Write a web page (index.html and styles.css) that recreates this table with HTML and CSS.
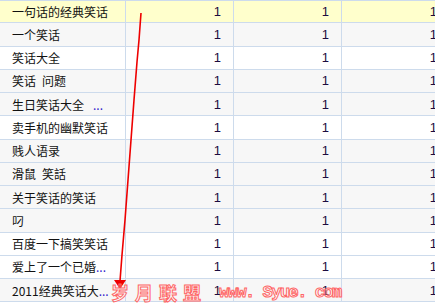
FILE: index.html
```html
<!DOCTYPE html>
<html lang="zh">
<head>
<meta charset="utf-8">
<title>关键词</title>
<link rel="stylesheet" href="styles.css">
</head>
<body>
<div class="grid">
  <div class="row hl"><div class="c name">一句话的经典笑话</div><div class="c num">1</div><div class="c num">1</div><div class="c num">1</div></div>
  <div class="row gr"><div class="c name">一个笑话</div><div class="c num">1</div><div class="c num">1</div><div class="c num">1</div></div>
  <div class="row wh"><div class="c name">笑话大全</div><div class="c num">1</div><div class="c num">1</div><div class="c num">1</div></div>
  <div class="row gr"><div class="c name">笑话<span class="gap"></span>问题</div><div class="c num">1</div><div class="c num">1</div><div class="c num">1</div></div>
  <div class="row gr"><div class="c name">生日笑话大全<span class="gap wide"></span><span class="dots">...</span></div><div class="c num">1</div><div class="c num">1</div><div class="c num">1</div></div>
  <div class="row wh"><div class="c name">卖手机的幽默笑话</div><div class="c num">1</div><div class="c num">1</div><div class="c num">1</div></div>
  <div class="row gr"><div class="c name">贱人语录</div><div class="c num">1</div><div class="c num">1</div><div class="c num">1</div></div>
  <div class="row gr"><div class="c name">滑鼠<span class="gap"></span>笑話</div><div class="c num">1</div><div class="c num">1</div><div class="c num">1</div></div>
  <div class="row gr"><div class="c name">关于笑话的笑话</div><div class="c num">1</div><div class="c num">1</div><div class="c num">1</div></div>
  <div class="row gr"><div class="c name">叼</div><div class="c num">1</div><div class="c num">1</div><div class="c num">1</div></div>
  <div class="row wh"><div class="c name">百度一下搞笑笑话</div><div class="c num">1</div><div class="c num">1</div><div class="c num">1</div></div>
  <div class="row wh"><div class="c name">爱上了一个已婚<span class="dots">...</span></div><div class="c num">1</div><div class="c num">1</div><div class="c num">1</div></div>
  <div class="row gr"><div class="c name">2011经典笑话大<span class="dots">...</span></div><div class="c num">1</div><div class="c num">1</div><div class="c num">1</div></div>
</div>
<svg class="arrow" width="435" height="303" viewBox="0 0 435 303">
  <polyline points="141,13 139,40 137,62 134,100 131,140 128,180 125,220 122,255 120,281" fill="none" stroke="#ee0000" stroke-width="1.6"/>
  <polygon points="114,280 126,280 120,289" fill="#ee0000"/>
</svg>
<div class="mark"><span class="cn">岁月联盟</span><span class="en">www.&nbsp;Syue.&nbsp;com</span></div>
</body>
</html>
```

FILE: styles.css
```css
html, body {
  margin: 0;
  padding: 0;
  background: #ffffff;
  overflow: hidden;
  width: 435px;
  height: 303px;
}
body {
  position: relative;
  font-family: "Noto Sans CJK SC", "Liberation Sans", sans-serif;
}
.grid {
  width: 452px;
  border-top: 1px solid #cddbec;
}
.row {
  display: flex;
  height: 23.25px;
  box-sizing: border-box;
  border-bottom: 1px solid #cddbec;
}
.row:first-child { height: 22.25px; }
.hl { background: #ffffcc; }
.gr { background: #f7f7f7; }
.wh { background: #ffffff; }
.c {
  box-sizing: border-box;
  border-right: 1px solid #cddbec;
  display: flex;
  align-items: center;
  white-space: nowrap;
}
.name {
  width: 126px;
  padding-left: 12px;
  font-size: 12px;
  color: #111;
}
.gap {
  display: inline-block;
  width: 6px;
}
.gap.wide { width: 9px; }
.num {
  width: 108px;
  justify-content: flex-end;
  padding-right: 12px;
  font-family: "Liberation Sans", Arial, sans-serif;
  font-size: 13px;
  color: #1c0c40;
}
.dots { color: #3322cc; }
.arrow {
  position: absolute;
  left: 0;
  top: 0;
  pointer-events: none;
}
.mark {
  position: absolute;
  left: 111px;
  top: 281px;
  display: flex;
  align-items: flex-start;
  white-space: nowrap;
  color: rgba(255,255,255,0.2);
  -webkit-text-stroke: 1px #ff6666;
  font-weight: bold;
}
.cn {
  font-family: "Noto Sans CJK SC", sans-serif;
  font-size: 18px;
  letter-spacing: 6px;
  line-height: 22px;
}
.en {
  margin-left: 12px;
  margin-top: 2px;
  font-family: "Liberation Mono", monospace;
  font-size: 17px;
  letter-spacing: -1.5px;
  line-height: 20px;
}
```
